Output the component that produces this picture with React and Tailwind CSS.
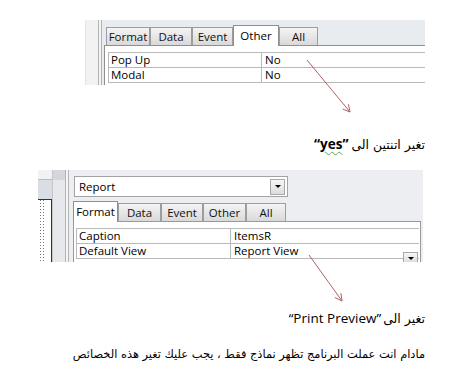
import React from 'react';

// Property sheet tab strip
const Tabs = ({ tabs, active, widths }) => (
  <div className="flex items-end h-[20px] relative z-10">
    {tabs.map((t, i) =>
      t === active ? (
        <div
          key={t}
          className="h-[21px] -mb-px bg-white border border-b-0 border-[#8e8f8f] flex items-start justify-center pt-[1px] text-[11.5px] text-black"
          style={{ width: widths[i] }}>
          {t}
        </div>
      ) : (
        <div
          key={t}
          className="h-[18px] bg-gradient-to-b from-[#f4f4f4] to-[#d9d9d9] border border-b-0 border-[#9c9c9c] flex items-center justify-center text-[11.5px] text-[#111]"
          style={{ width: widths[i] }}>
          {t}
        </div>
      )
    )}
  </div>
);

const DropBtn = ({ className }) => (
  <div
    className={
      'shrink-0 bg-gradient-to-b from-[#f6f6f6] to-[#dcdcdc] border border-[#a8a8a8] flex items-center justify-center ' +
      className
    }>
    <div className="w-0 h-0 border-l-[3px] border-r-[3px] border-t-[3px] border-l-transparent border-r-transparent border-t-black" />
  </div>
);

export default function App() {
  return (
    <div className="relative w-[466px] h-[381px] bg-white overflow-hidden font-['Open_Sans',sans-serif]">
      {/* first screenshot: Other tab */}
      <div className="ml-[85px] pt-[20px] w-[340px] h-[85px] flex">
        <div className="w-[13px] bg-[#f2f2f2] border-l border-[#e6e6e6]" />
        <div className="w-[4px] border-x border-[#b4b4b4] bg-[#f4f4f4]" />
        <div className="flex-1 bg-[#e8ecf1] pt-[5px] pl-[2px] flex flex-col">
          <div className="ml-[2px]">
            <Tabs
              tabs={['Format', 'Data', 'Event', 'Other', 'All']}
              active="Other"
              widths={[44, 42, 41, 46, 39]}
            />
          </div>
          <div className="flex-1 bg-white border-t border-l border-[#8e8f8f] pl-[3px] pt-[6px] overflow-hidden">
            <div className="border-t border-l border-[#b9b9b9] text-[11.5px] leading-[14px] text-black">
              <div className="flex h-[15px] border-b border-[#b9b9b9]">
                <div className="w-[152px] pl-[2px]">Pop Up</div>
                <div className="flex-1 border-l border-[#b9b9b9] pl-[3px]">No</div>
              </div>
              <div className="flex h-[15px] border-b border-[#b9b9b9]">
                <div className="w-[152px] pl-[2px]">Modal</div>
                <div className="flex-1 border-l border-[#b9b9b9] pl-[3px]">No</div>
              </div>
            </div>
          </div>
        </div>
      </div>

      <div
        dir="ltr"
        className="mt-[51px] w-[425px] flex justify-end items-baseline h-[16px] leading-[16px] text-[13px] text-black">
        <span className="font-['Open_Sans',sans-serif] font-bold text-[13.5px]">
          “<span className="underline decoration-wavy decoration-[#5aa55a] decoration-1 underline-offset-2">yes</span>”
        </span>
        <span className="ml-[3px] font-['DejaVu_Sans',sans-serif] text-[12.5px]">تغير اتنتين الى</span>
      </div>

      {/* second screenshot: Format tab of a report */}
      <div className="ml-[38px] mt-[18px] w-[385px] h-[92px] flex">
        <div className="w-[14px] flex flex-col">
          <div className="h-[10px] bg-[#f1f2f4] border-b border-[#b8bcc4]" />
          <div className="h-[20px] bg-[#d9dde5] border-b border-[#333]" />
          <div className="flex-1 flex gap-[2px] pl-[2px] border-r border-[#333]">
            <div className="w-px bg-[repeating-linear-gradient(to_bottom,#777_0_1px,transparent_1px_3px)]" />
            <div className="w-px bg-[repeating-linear-gradient(to_bottom,#777_0_1px,transparent_1px_3px)]" />
          </div>
        </div>
        <div className="w-[13px] bg-[#e6e8eb] border-l border-[#c6c6c6] flex flex-col">
          <div className="h-[10px] bg-[#d4d6da]" />
        </div>
        <div className="w-[4px] border-x border-[#b4b4b4] bg-[#f4f4f4]" />
        <div className="flex-1 bg-[#eceef2] pt-[6px] flex flex-col">
          <div className="ml-[5px] w-[214px] h-[21px] bg-white border border-[#a3a3a3] flex items-center justify-between pl-[4px] pr-[2px] text-[11.5px] text-black">
            <span>Report</span>
            <DropBtn className="w-[15px] h-[16px]" />
          </div>
          <div className="ml-[4px] mt-[4px]">
            <Tabs
              tabs={['Format', 'Data', 'Event', 'Other', 'All']}
              active="Format"
              widths={[45, 43, 42, 43, 40]}
            />
          </div>
          <div className="flex-1 ml-[4px] mr-[2px] bg-white border-t border-x border-[#9a9a9a] pl-[2px] pr-[1px] pt-[6px] overflow-hidden">
            <div className="border-t border-l border-[#b9b9b9] text-[11.5px] leading-[14px] text-black">
              <div className="flex h-[15px] border-b border-[#b9b9b9]">
                <div className="w-[153px] pl-[2px]">Caption</div>
                <div className="flex-1 border-l border-[#b9b9b9] pl-[3px]">ItemsR</div>
              </div>
              <div className="flex h-[15px] border-b border-[#b9b9b9]">
                <div className="w-[153px] pl-[2px]">Default View</div>
                <div className="flex-1 border-l border-[#b9b9b9] pl-[3px] flex justify-between items-start">
                  <span>Report View</span>
                  <DropBtn className="w-[15px] h-[12px] mt-[8px] mr-[1px]" />
                </div>
              </div>
            </div>
          </div>
        </div>
      </div>

      <div
        dir="ltr"
        className="mt-[48px] w-[425px] flex justify-end items-baseline h-[16px] leading-[16px] text-[13.5px] text-black">
        <span className="font-['Open_Sans',sans-serif]">“Print Preview”</span>
        <span className="ml-[2px] font-['DejaVu_Sans',sans-serif] text-[12.5px]">تغير الى</span>
      </div>

      <div
        dir="rtl"
        className="mt-[20px] w-[425px] h-[16px] leading-[16px] text-[11.4px] text-black font-['DejaVu_Sans',sans-serif]">
        مادام انت عملت البرنامج تظهر نماذج فقط ، يجب عليك تغير هذه الخصائص
      </div>

      {/* arrows drawn over the page */}
      <svg className="absolute left-0 top-0 pointer-events-none" width="466" height="381">
        <g stroke="#b35f66" strokeWidth="1" fill="none">
          <line x1="307" y1="60" x2="350" y2="112" />
          <polyline points="342.6,109 350,112 348.4,104.2" />
          <line x1="309" y1="255" x2="342" y2="301" />
          <polyline points="334.8,297.5 342,301 340.9,293.1" />
        </g>
      </svg>
    </div>
  );
}
